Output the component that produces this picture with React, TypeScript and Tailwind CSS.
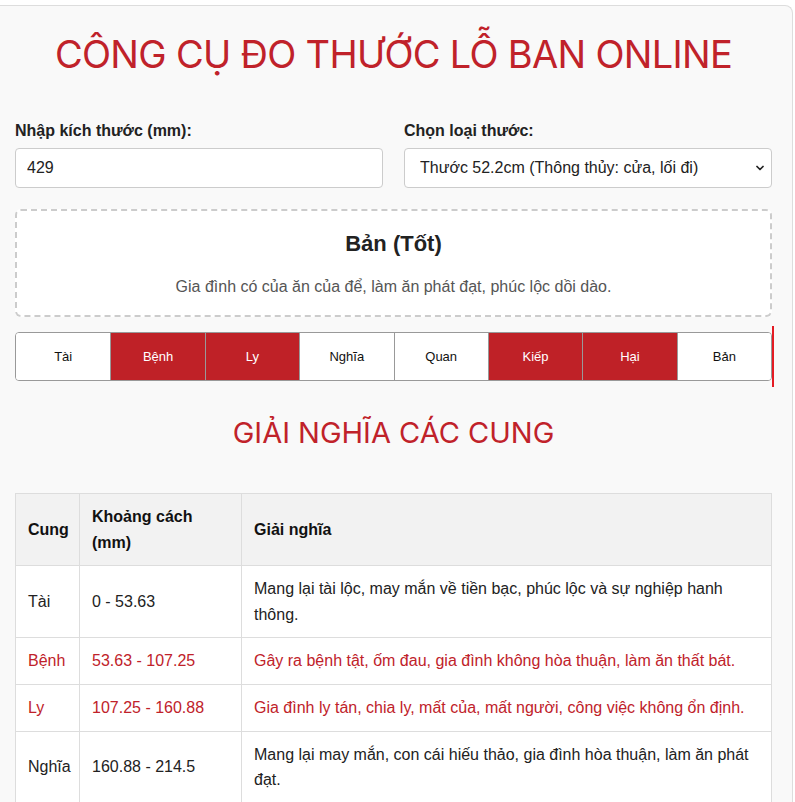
import { ChevronDown } from 'lucide-react'

const cungs = [
  { name: 'Tài', good: true },
  { name: 'Bệnh', good: false },
  { name: 'Ly', good: false },
  { name: 'Nghĩa', good: true },
  { name: 'Quan', good: true },
  { name: 'Kiếp', good: false },
  { name: 'Hại', good: false },
  { name: 'Bản', good: true },
]

const rows = [
  {
    name: 'Tài',
    range: '0 - 53.63',
    desc: 'Mang lại tài lộc, may mắn về tiền bạc, phúc lộc và sự nghiệp hanh thông.',
    good: true,
  },
  {
    name: 'Bệnh',
    range: '53.63 - 107.25',
    desc: 'Gây ra bệnh tật, ốm đau, gia đình không hòa thuận, làm ăn thất bát.',
    good: false,
  },
  {
    name: 'Ly',
    range: '107.25 - 160.88',
    desc: 'Gia đình ly tán, chia ly, mất của, mất người, công việc không ổn định.',
    good: false,
  },
  {
    name: 'Nghĩa',
    range: '160.88 - 214.5',
    desc: 'Mang lại may mắn, con cái hiếu thảo, gia đình hòa thuận, làm ăn phát đạt.',
    good: true,
  },
]

export default function App() {
  return (
    <div className="min-h-screen bg-white font-['Liberation_Sans',Arial,sans-serif] text-[#222]">
      <div className="mt-[5px] w-[793px] border-t border-r border-[#ddd] rounded-tr-lg bg-[#f9f9f9] pl-[15px] pr-[20px] pb-10">
        {/* Title */}
        <h1 className="pt-[24px] text-center font-['Inter',sans-serif] text-[38px] font-normal leading-[48px] tracking-[-0.7px] text-[#c0222a]">
          CÔNG CỤ ĐO THƯỚC LỖ BAN ONLINE
        </h1>

        {/* Inputs */}
        <div className="mt-[43px] grid grid-cols-2 gap-[21px]">
          <div>
            <label className="block text-[16px] font-bold leading-5 text-[#222]">Nhập kích thước (mm):</label>
            <input
              defaultValue="429"
              className="mt-[7px] h-10 w-full rounded border border-[#ccc] bg-white px-[11px] text-[16px] text-[#222] outline-none"
            />
          </div>
          <div>
            <label className="block text-[16px] font-bold leading-5 text-[#222]">Chọn loại thước:</label>
            <div className="relative mt-[7px]">
              <select
                defaultValue="522"
                className="h-10 w-full appearance-none rounded border border-[#ccc] bg-white px-[15px] text-[16px] text-[#222] outline-none"
              >
                <option value="522">Thước 52.2cm (Thông thủy: cửa, lối đi)</option>
                <option value="429">Thước 42.9cm (Dương trạch)</option>
                <option value="388">Thước 38.8cm (Âm trạch)</option>
              </select>
              <ChevronDown
                className="pointer-events-none absolute right-[6px] top-[14px] h-3 w-3 text-[#222]"
                strokeWidth={3.5}
              />
            </div>
          </div>
        </div>

        {/* Result */}
        <div className="mt-[21px] rounded-md border-2 border-dashed border-[#ccc] bg-white pt-[20px] pb-[16px] text-center">
          <h3 className="text-[22px] font-bold leading-[26px] text-[#222]">Bản (Tốt)</h3>
          <p className="mt-[18px] text-[16px] leading-6 text-[#555]">
            Gia đình có của ăn của để, làm ăn phát đạt, phúc lộc dồi dào.
          </p>
        </div>

        {/* Ruler */}
        <div className="relative mt-[15px]">
          <div className="grid h-[49px] grid-cols-8 overflow-hidden rounded border border-[#999]">
            {cungs.map((c, i) => (
              <div
                key={c.name}
                className={`flex items-center justify-center text-[13px] ${i > 0 ? 'border-l border-[#999]' : ''} ${
                  c.good ? 'bg-white text-[#111]' : 'bg-[#bf2127] text-white'
                }`}
              >
                {c.name}
              </div>
            ))}
          </div>
          <div className="absolute right-[-2px] top-[-6px] h-[61px] w-[2px] bg-[#e41b23]" />
        </div>

        {/* Section title */}
        <h2 className="mt-[34px] text-center font-['Inter',sans-serif] text-[29px] font-normal leading-9 text-[#c0222a]">
          GIẢI NGHĨA CÁC CUNG
        </h2>

        {/* Table */}
        <table className="mt-[42px] w-full table-fixed border-collapse bg-white text-left text-[16px] leading-[25.6px]">
          <colgroup>
            <col className="w-[64px]" />
            <col className="w-[162px]" />
            <col />
          </colgroup>
          <thead>
            <tr className="bg-[#f2f2f2]">
              <th className="border border-[#ddd] px-3 py-[10px] font-bold text-[#111]">Cung</th>
              <th className="border border-[#ddd] px-3 py-[10px] font-bold text-[#111]">Khoảng cách (mm)</th>
              <th className="border border-[#ddd] px-3 py-[10px] font-bold text-[#111]">Giải nghĩa</th>
            </tr>
          </thead>
          <tbody>
            {rows.map((r) => {
              const color = r.good ? 'text-[#222]' : 'text-[#c0222a]'
              return (
                <tr key={r.name}>
                  <td className={`whitespace-nowrap border border-[#ddd] px-3 py-[10px] ${color}`}>{r.name}</td>
                  <td className={`border border-[#ddd] px-3 py-[10px] ${color}`}>{r.range}</td>
                  <td className={`border border-[#ddd] px-3 py-[10px] ${color}`}>{r.desc}</td>
                </tr>
              )
            })}
          </tbody>
        </table>
      </div>
    </div>
  )
}
